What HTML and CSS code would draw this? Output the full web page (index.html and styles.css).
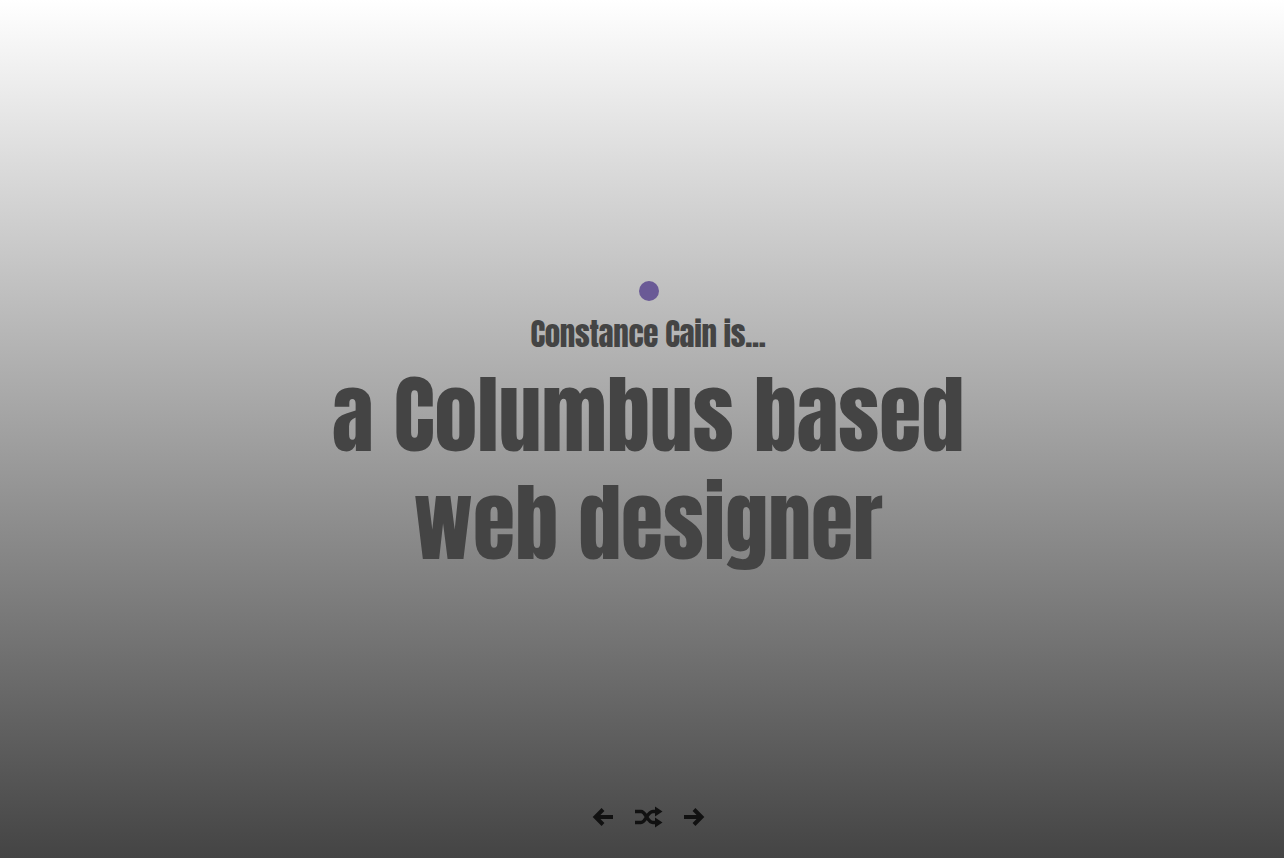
FILE: index.html
```html
<!DOCTYPE html>
<html lang="en">
<head>
<meta charset="utf-8">
<title>Constance Cain</title>
<link rel="stylesheet" href="styles.css">
</head>
<body>
<div class="page">
  <main class="hero">
    <span class="dot"></span>
    <h2 class="intro">Constance Cain is...</h2>
    <h1 class="tagline">a Columbus based<br>web designer</h1>
  </main>
  <nav class="controls">
    <a class="ctl" href="#" aria-label="Previous">
      <svg width="22" height="20" viewBox="0 0 22 20"><path d="M21 10H4M11 2.5L3.5 10L11 17.5" fill="none" stroke="#111" stroke-width="4" stroke-linejoin="miter"/></svg>
    </a>
    <a class="ctl" href="#" aria-label="Shuffle">
      <svg width="29" height="22" viewBox="0 0 29 22"><path d="M1 5.5H7C12 5.5 13 16.5 19 16.5H22M1 16.5H7C12 16.5 13 5.5 19 5.5H22" fill="none" stroke="#111" stroke-width="3.4"/><path d="M21 0.5L28.5 5.5L21 10.5Z M21 11.5L28.5 16.5L21 21.5Z" fill="#111"/></svg>
    </a>
    <a class="ctl" href="#" aria-label="Next">
      <svg width="22" height="20" viewBox="0 0 22 20"><path d="M1 10H18M11 2.5L18.5 10L11 17.5" fill="none" stroke="#111" stroke-width="4" stroke-linejoin="miter"/></svg>
    </a>
  </nav>
</div>
</body>
</html>
```
FILE: styles.css
```css
html, body {
  margin: 0;
  height: 100%;
}
body {
  background: linear-gradient(to bottom, #ffffff 0%, #444444 100%);
  color: #444;
  font-family: "Anton", "Liberation Sans", sans-serif;
}
.page {
  box-sizing: border-box;
  height: 100vh;
  padding-left: 12px;
  display: flex;
  flex-direction: column;
  align-items: center;
}
.hero {
  display: flex;
  flex-direction: column;
  align-items: center;
  padding-top: 281px;
  text-align: center;
}
.dot {
  width: 20px;
  height: 20px;
  border-radius: 50%;
  background: #6a5a96;
  margin-left: 1px;
}
.intro {
  margin: 13px 0 0;
  font-size: 31px;
  line-height: 40px;
  letter-spacing: -0.3px;
  font-weight: 400;
}
.tagline {
  margin: 7px 0 0;
  font-size: 86px;
  line-height: 108px;
  font-weight: 400;
}
.controls {
  margin-top: auto;
  padding-bottom: 30px;
  display: flex;
  align-items: center;
  gap: 20px;
}
.ctl {
  display: flex;
  align-items: center;
  text-decoration: none;
}
```
